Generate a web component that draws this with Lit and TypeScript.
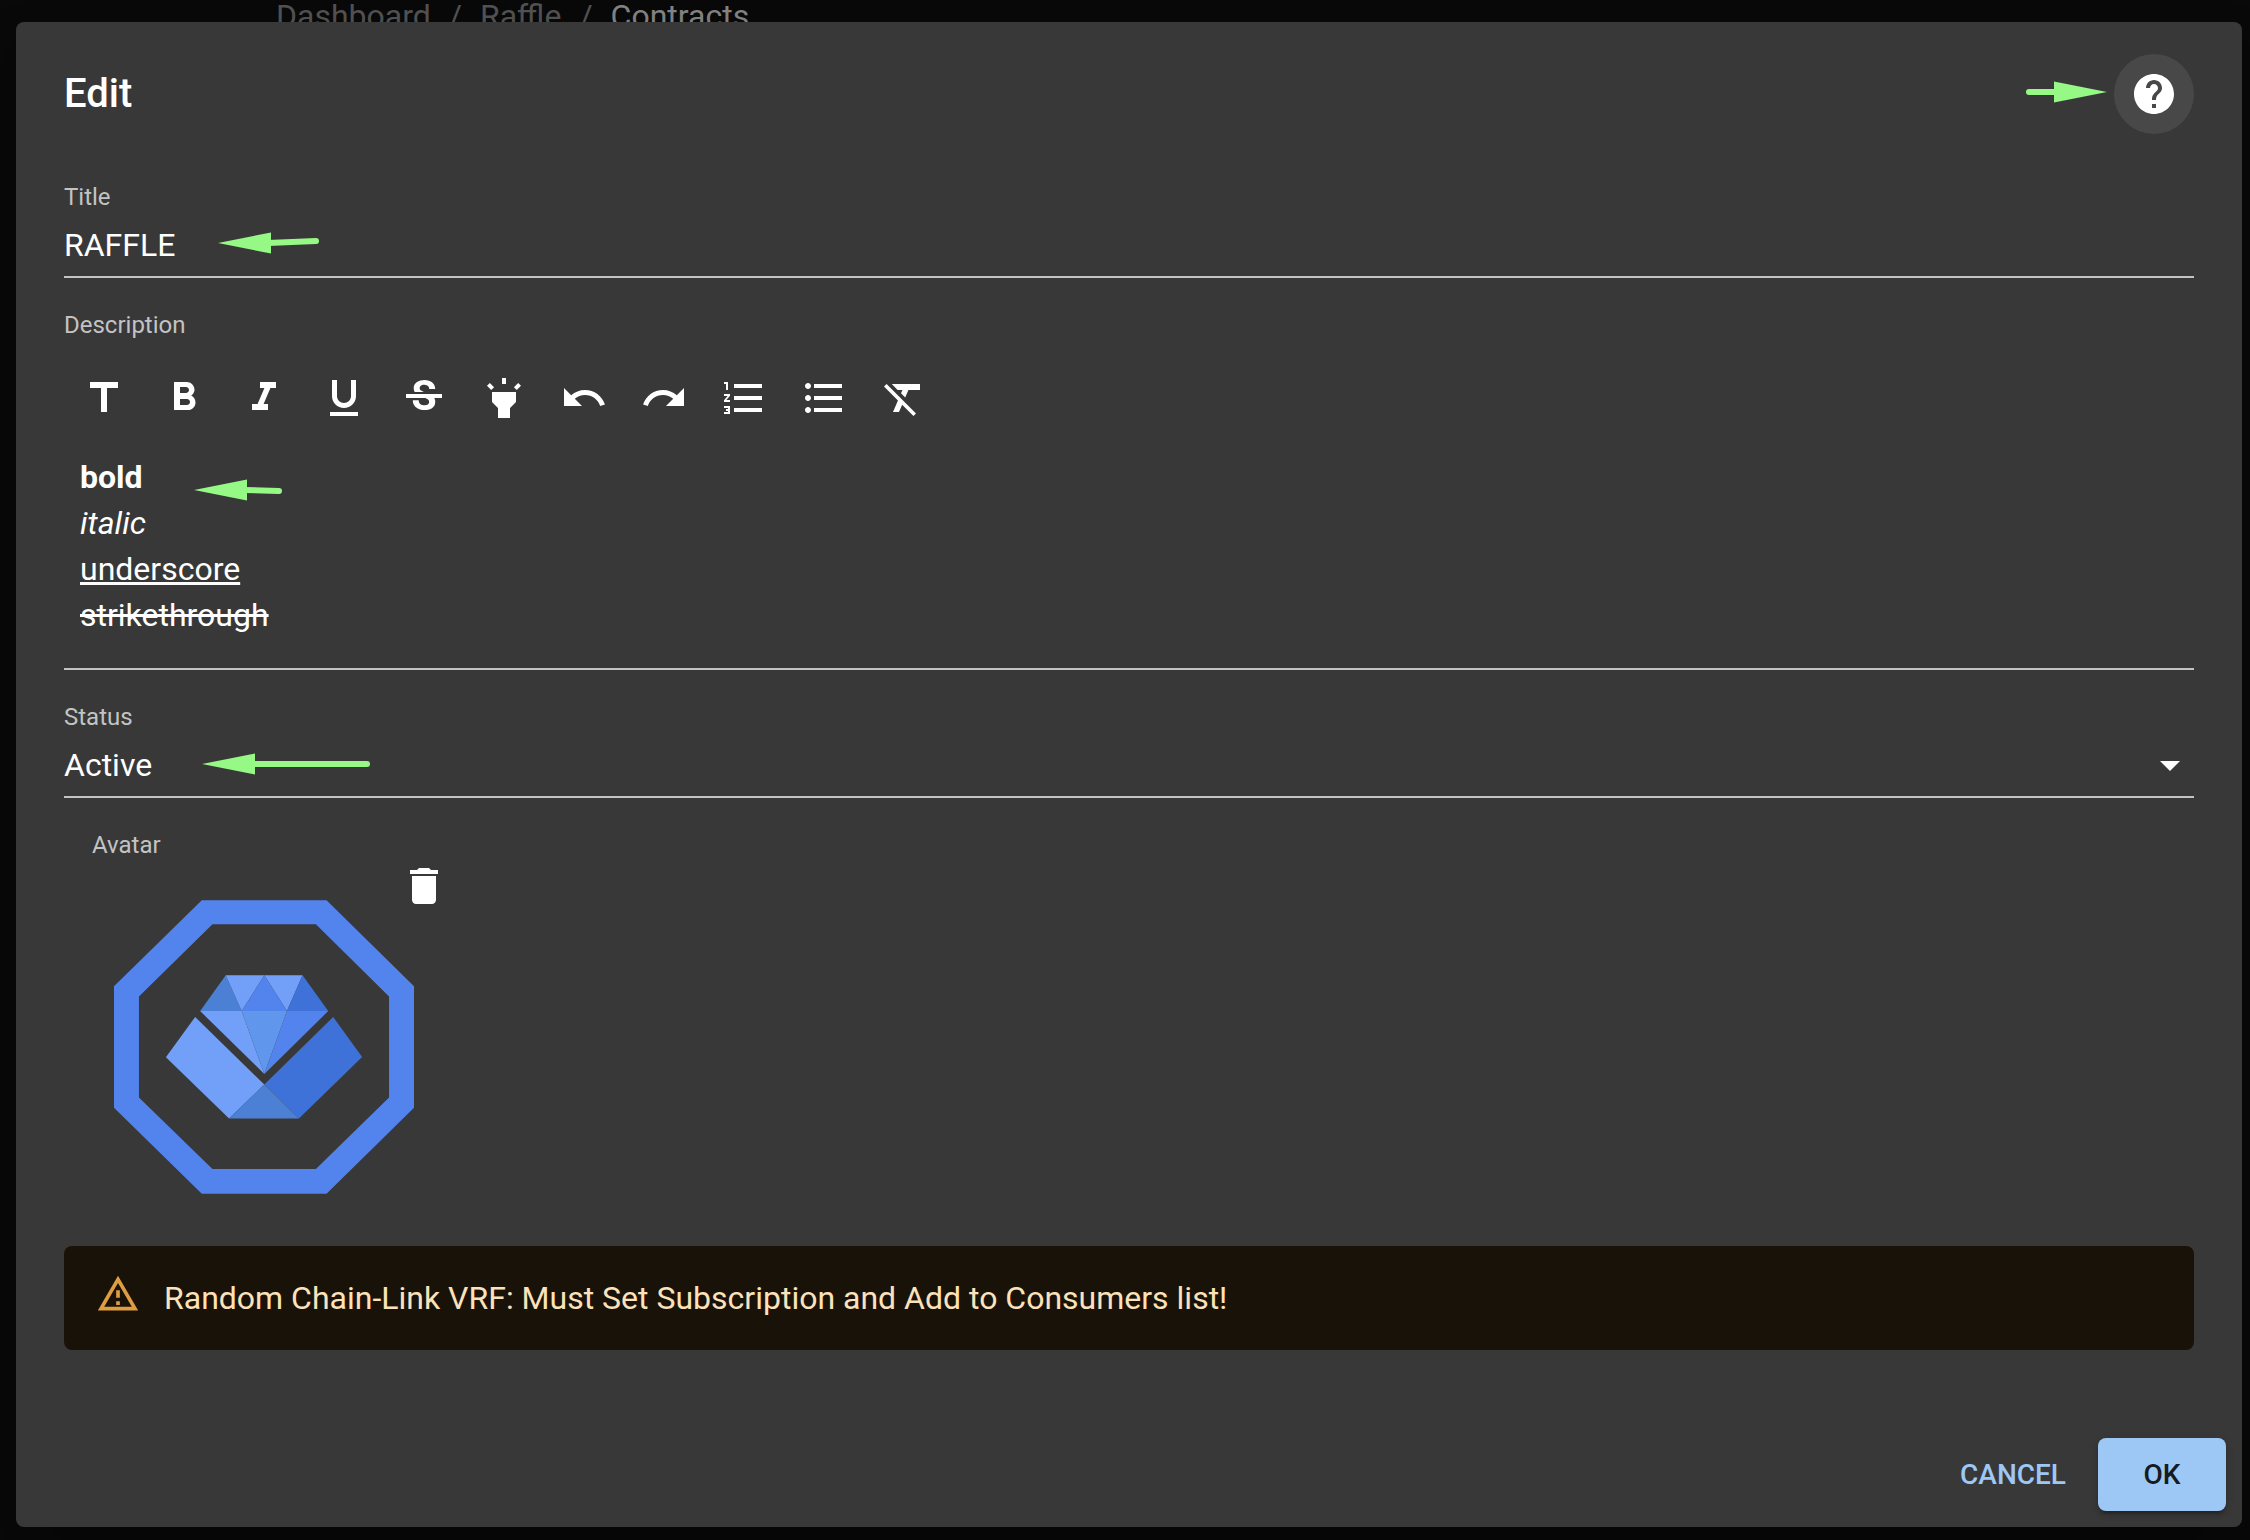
import { LitElement, html, css, svg } from "lit";
import { customElement, property, state } from "lit/decorators.js";

const ICONS: Record<string, string> = {
  title: "M5 4v3h5.5v12h3V7H19V4z",
  bold: "M15.6 10.79c.97-.67 1.65-1.77 1.65-2.79 0-2.26-1.75-4-4-4H7v14h7.04c2.09 0 3.71-1.7 3.71-3.79 0-1.52-.86-2.82-2.15-3.42zM10 6.5h3c.83 0 1.5.67 1.5 1.5s-.67 1.5-1.5 1.5h-3v-3zm3.5 9H10v-3h3.5c.83 0 1.5.67 1.5 1.5s-.67 1.5-1.5 1.5z",
  italic: "M10 4v3h2.21l-3.42 8H6v3h8v-3h-2.21l3.42-8H18V4z",
  underline: "M12 17c3.31 0 6-2.69 6-6V3h-2.5v8c0 1.93-1.57 3.5-3.5 3.5S8.500 12.93 8.500 11V3H6v8c0 3.310 2.690 6 6 6zm-7 2v2h14v-2H5z",
  strike: "M6.850 7.080C6.850 4.370 9.450 3 12.240 3c1.640 0 3 .49 3.900 1.280.77.65 1.460 1.730 1.460 3.240h-3.010c0-.31-.05-.59-.15-.85-.29-.86-1.200-1.280-2.250-1.280-1.860 0-2.340 1.020-2.340 1.700 0 .48.250.88.740 1.210.38.250.77.480 1.410.700H7.390c-.21-.34-.54-.89-.54-1.920zM21 12v-2H3v2h9.620c1.150.45 1.960.75 1.960 1.970 0 1-.81 1.670-2.280 1.670-1.540 0-2.930-.54-2.930-2.510H6.400c0 .55.08 1.130.24 1.580.81 2.290 3.290 3.300 5.670 3.300 2.270 0 5.300-.89 5.300-4.050 0-.3-.01-1.160-.48-1.940H21V12z",
  highlight: "M6 14l3 3v5h6v-5l3-3V9H6zm5-12h2v3h-2zM3.500 5.875L4.914 4.460l2.120 2.122L5.620 7.997zm13.460.710l2.123-2.120 1.414 1.414L18.375 8z",
  undo: "M12.500 8c-2.650 0-5.050.99-6.900 2.600L2 7v9h9l-3.620-3.620c1.390-1.160 3.160-1.880 5.120-1.880 3.540 0 6.550 2.310 7.600 5.500l2.370-.78C21.080 11.030 17.150 8 12.500 8z",
  redo: "M18.400 10.600C16.550 8.990 14.150 8 11.500 8c-4.650 0-8.580 3.030-9.960 7.220L3.900 16c1.050-3.190 4.050-5.500 7.600-5.500 1.950 0 3.730.72 5.120 1.880L13 16h9V7l-3.600 3.600z",
  numbered: "M2 17h2v.5H3v1h1v.5H2v1h3v-4H2v1zm1-9h1V4H2v1h1v3zm-1 3h1.800L2 13.100v.9h3v-1H3.200L5 10.900V10H2v1zm5-6v2h14V5H7zm0 14h14v-2H7v2zm0-6h14v-2H7v2z",
  bulleted: "M4 10.500c-.83 0-1.500.67-1.500 1.500s.67 1.500 1.500 1.500 1.500-.67 1.500-1.500-.67-1.500-1.500-1.500zm0-6c-.83 0-1.500.67-1.500 1.500S3.170 7.500 4 7.500 5.500 6.830 5.500 6 4.830 4.500 4 4.500zm0 12c-.83 0-1.500.68-1.500 1.500s.68 1.500 1.500 1.500 1.500-.68 1.500-1.500-.67-1.500-1.500-1.500zM7 19h14v-2H7v2zm0-6h14v-2H7v2zm0-8v2h14V5H7z",
  clear: "M3.270 5L2 6.270l6.970 6.970L6.500 19h3l1.570-3.660L16.730 21 18 19.730 3.550 5.270 3.270 5zM6 5v.18L8.820 8h2.400l-.72 1.680 2.100 2.100L14.210 8H20V5H6z",
  help: "M12 2C6.480 2 2 6.480 2 12s4.480 10 10 10 10-4.480 10-10S17.520 2 12 2zm1 17h-2v-2h2v2zm2.070-7.750l-.9.920C13.450 12.900 13 13.500 13 15h-2v-.5c0-1.100.45-2.100 1.170-2.830l1.240-1.260c.37-.36.59-.86.59-1.410 0-1.100-.9-2-2-2s-2 .9-2 2H8c0-2.210 1.790-4 4-4s4 1.790 4 4c0 .88-.36 1.680-.93 2.250z",
  dropdown: "M7 10l5 5 5-5z",
  trash: "M6 19c0 1.100.9 2 2 2h8c1.100 0 2-.9 2-2V7H6v12zM19 4h-3.500l-1-1h-5l-1 1H5v2h14V4z",
  warning: "M12 5.990L19.530 19H4.470L12 5.990M12 2L1 21h22L12 2zm1 14h-2v2h2v-2zm0-6h-2v4h2v-4z",
};

const TOOLS: [string, string][] = [
  ["title", "Title"],
  ["bold", "Bold"],
  ["italic", "Italic"],
  ["underline", "Underline"],
  ["strike", "Strikethrough"],
  ["highlight", "Highlight"],
  ["undo", "Undo"],
  ["redo", "Redo"],
  ["numbered", "Numbered list"],
  ["bulleted", "Bulleted list"],
  ["clear", "Clear formatting"],
];

@customElement("ui-icon")
class UiIcon extends LitElement {
  @property() name = "";

  static styles = css`
    :host {
      display: block;
      flex: none;
      width: 48px;
      height: 48px;
    }
    .glyph {
      display: block;
      width: 100%;
      height: 100%;
      fill: currentColor;
    }
  `;

  render() {
    return html`<svg class="glyph" viewBox="0 0 24 24" aria-hidden="true"><path d=${ICONS[this.name] ?? ""}></path></svg>`;
  }
}

/* Green pointer: a long arrow head with a rounded tail of variable length. */
@customElement("pointer-arrow")
class PointerArrow extends LitElement {
  @property({ type: Number }) length = 100;
  @property({ type: Number }) slope = 0;
  @property({ type: Boolean }) flip = false;

  static styles = css`
    :host {
      display: block;
      pointer-events: none;
    }
    .arrow {
      display: block;
      fill: #97f985;
      stroke: #97f985;
    }
  `;

  render() {
    const l = this.length;
    const turn = this.flip ? `rotate(180 ${l / 2} 11)` : "";
    return html`<svg class="arrow" width=${l} height="22" viewBox="0 0 ${l} 22" aria-hidden="true">
      ${svg`<g transform=${turn}>
        <path stroke="none" d="M0 11L53 0.500V21.500z"></path>
        <path fill="none" stroke-width="6" stroke-linecap="round" d="M50 11L${l - 3} ${11 + this.slope}"></path>
      </g>`}
    </svg>`;
  }
}

@customElement("raffle-logo")
class RaffleLogo extends LitElement {
  static styles = css`
    :host {
      display: block;
    }
    .logo {
      display: block;
      width: 300px;
      height: 294px;
    }
  `;

  render() {
    return html`<svg class="logo" viewBox="101 147 902 882" role="img" aria-label="Avatar">
      <path fill="#5384ed" fill-rule="evenodd" d="M365 147H740L1003 405V771L740 1029H365L101 771V405zM397 219L176 436V740L397 955H708L928 740V436L708 219z"></path>
      <path fill="#4c80d5" d="M437 372L485 480H360z"></path>
      <path fill="#72a0f8" d="M437 372H553L485 480zM553 372H668L621 480z"></path>
      <path fill="#5384ed" d="M553 372L621 480H485z"></path>
      <path fill="#3f72d9" d="M668 372L745 480H621z"></path>
      <path fill="#72a0f8" d="M360 480H485L553 669z"></path>
      <path fill="#6096eb" d="M485 480H621L553 669z"></path>
      <path fill="#5384ed" d="M621 480H745L553 669z"></path>
      <path fill="#72a0f8" d="M345 498L553 701L447 803L257 619z"></path>
      <path fill="#3f72d9" d="M760 498L847 618L657 803L553 701z"></path>
      <path fill="#4c80d5" d="M553 701L657 803H447z"></path>
    </svg>`;
  }
}

@customElement("app-root")
class AppRoot extends LitElement {
  @state() private titleText = "RAFFLE";

  static styles = css`
    :host {
      display: block;
      color: #fff;
      font-family: Roboto, "Liberation Sans", sans-serif;
      font-size: 32px;
      line-height: 46px;
    }
    * {
      box-sizing: border-box;
    }
    .page {
      display: grid;
      min-height: 100vh;
      background: #0a0a0a;
      overflow: hidden;
    }
    .crumbs,
    .overlay {
      grid-area: 1 / 1;
      min-width: 0;
    }
    .crumbs {
      display: flex;
      align-items: flex-start;
      gap: 18px;
      padding-left: 276px;
      line-height: 32px;
      color: #565656;
    }
    .crumb {
      color: inherit;
      text-decoration: none;
    }
    .current {
      color: #8a8a8a;
    }
    .overlay {
      position: relative;
      padding: 22px 8px 13px 16px;
    }
    .dialog {
      display: flex;
      flex-direction: column;
      border-radius: 8px;
      background: #383838;
      box-shadow: 0 22px 30px -14px rgba(0, 0, 0, 0.2),
        0 48px 76px 6px rgba(0, 0, 0, 0.14),
        0 18px 92px 16px rgba(0, 0, 0, 0.12);
    }
    .header {
      position: relative;
      display: flex;
      align-items: center;
      justify-content: space-between;
      padding: 32px 48px 16px;
    }
    .heading {
      margin: 0;
      font-size: 40px;
      font-weight: 500;
      line-height: 64px;
    }
    .icon-button {
      display: grid;
      place-items: center;
      width: 80px;
      height: 80px;
      padding: 0;
      border: 0;
      border-radius: 50%;
      background: none;
      color: #fff;
      cursor: pointer;
    }
    .icon-button.active {
      background: #484848;
    }
    .content {
      display: flex;
      flex-direction: column;
      gap: 30px;
      padding: 30px 48px 0;
    }
    .field {
      position: relative;
      display: flex;
      flex-direction: column;
    }
    .label {
      font-size: 24px;
      line-height: 34px;
      color: #c3c3c3;
    }
    .control {
      position: relative;
      display: flex;
      align-items: center;
      border-bottom: 2px solid #c3c3c3;
    }
    .input {
      flex: 1;
      min-width: 0;
      height: 62px;
      margin: 0;
      padding: 8px 0;
      border: 0;
      border-radius: 0;
      outline: 0;
      background: none;
      color: inherit;
      font: inherit;
      appearance: none;
    }
    .caret {
      position: absolute;
      right: 0;
      pointer-events: none;
    }
    .toolbar {
      display: flex;
      flex-wrap: wrap;
      padding: 16px 0;
    }
    .editor {
      padding: 0 16px 30px;
      border-bottom: 2px solid #c3c3c3;
      outline: 0;
    }
    .line {
      margin: 0;
    }
    .avatar {
      position: relative;
      padding-left: 28px;
    }
    .picture {
      position: relative;
      padding: 38px 22px 22px;
    }
    .remove {
      position: absolute;
      top: -16px;
      left: 292px;
    }
    .alert {
      display: flex;
      gap: 24px;
      padding: 12px 32px;
      border-radius: 8px;
      background: #191209;
      color: #fbe2bb;
    }
    .alert-icon {
      width: 44px;
      height: 44px;
      margin: 14px 0;
      color: #df9d41;
    }
    .message {
      padding: 16px 0;
      line-height: 48px;
    }
    .actions {
      display: flex;
      justify-content: flex-end;
      gap: 16px;
      padding: 88px 16px 16px;
    }
    .button {
      min-width: 128px;
      padding: 12px 16px;
      border: 0;
      border-radius: 8px;
      background: none;
      color: #9dc8f5;
      font: inherit;
      font-size: 28px;
      font-weight: 500;
      line-height: 49px;
      cursor: pointer;
    }
    .primary {
      background: #9dc8f5;
      color: #151b21;
      box-shadow: 0 6px 2px -4px rgba(0, 0, 0, 0.2),
        0 4px 4px rgba(0, 0, 0, 0.14), 0 2px 10px rgba(0, 0, 0, 0.12);
    }
    .pointer {
      position: absolute;
    }
    .to-help {
      top: 59px;
      right: 135px;
    }
    .to-title {
      top: 52px;
      left: 154px;
    }
    .to-text {
      top: 171px;
      left: 130px;
    }
    .to-status {
      top: 53px;
      left: 138px;
    }
  `;

  render() {
    return html`
      <div class="page">
        <nav class="crumbs" aria-label="Breadcrumb">
          <a class="crumb" href="#dashboard">Dashboard</a><span>/</span>
          <a class="crumb" href="#raffle">Raffle</a><span>/</span>
          <a class="crumb current" href="#contracts" aria-current="page">Contracts</a>
        </nav>
        <div class="overlay">
          <section class="dialog" role="dialog" aria-labelledby="heading">
            <header class="header">
              <h2 class="heading" id="heading">Edit</h2>
              <button class="icon-button active" type="button" aria-label="Help">
                <ui-icon name="help"></ui-icon>
              </button>
              <pointer-arrow class="pointer to-help" length="81" flip></pointer-arrow>
            </header>

            <div class="content">
              <div class="field">
                <label class="label" for="title">Title</label>
                <div class="control">
                  <input
                    class="input"
                    id="title"
                    type="text"
                    .value=${this.titleText}
                    @input=${(e: Event) => (this.titleText = (e.target as HTMLInputElement).value)}
                  />
                </div>
                <pointer-arrow class="pointer to-title" length="101" slope="-2"></pointer-arrow>
              </div>

              <div class="field">
                <span class="label" id="description">Description</span>
                <div class="toolbar" role="toolbar" aria-label="Formatting">
                  ${TOOLS.map(
                    ([icon, label]) => html`<button class="icon-button" type="button" aria-label=${label}>
                      <ui-icon name=${icon}></ui-icon>
                    </button>`
                  )}
                </div>
                <div class="editor" contenteditable="true" spellcheck="false" role="textbox" aria-multiline="true" aria-labelledby="description">
                  <p class="line"><b>bold</b></p>
                  <p class="line"><i>italic</i></p>
                  <p class="line"><u>underscore</u></p>
                  <p class="line"><s>strikethrough</s></p>
                </div>
                <pointer-arrow class="pointer to-text" length="88" slope="1"></pointer-arrow>
              </div>

              <div class="field">
                <label class="label" for="status">Status</label>
                <div class="control">
                  <select class="input" id="status">
                    <option selected>Active</option>
                  </select>
                  <ui-icon class="caret" name="dropdown"></ui-icon>
                </div>
                <pointer-arrow class="pointer to-status" length="168"></pointer-arrow>
              </div>

              <div class="field avatar">
                <span class="label">Avatar</span>
                <div class="picture">
                  <raffle-logo></raffle-logo>
                  <button class="icon-button remove" type="button" aria-label="Remove avatar">
                    <ui-icon name="trash"></ui-icon>
                  </button>
                </div>
              </div>

              <div class="alert" role="alert">
                <ui-icon class="alert-icon" name="warning"></ui-icon>
                <div class="message">Random Chain-Link VRF: Must Set Subscription and Add to Consumers list!</div>
              </div>
            </div>

            <footer class="actions">
              <button class="button" type="button">CANCEL</button>
              <button class="button primary" type="button">OK</button>
            </footer>
          </section>
        </div>
      </div>
    `;
  }
}
